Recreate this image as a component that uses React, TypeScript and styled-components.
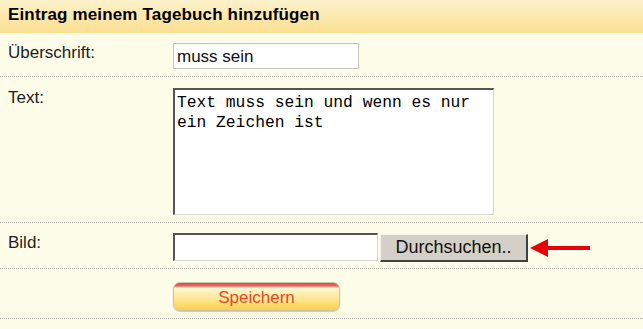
import styled, { createGlobalStyle } from 'styled-components';

const GlobalStyle = createGlobalStyle`
  html, body {
    margin: 0;
    padding: 0;
    background: #fdfdea;
  }
  body {
    font-family: "Liberation Sans", Arial, sans-serif;
    color: #1a1a1a;
  }
`;

const Panel = styled.div`
  width: 643px;
  background: #fdfdea;
`;

const Header = styled.h2`
  margin: 0;
  height: 33px;
  box-sizing: border-box;
  padding: 5px 0 8px 8px;
  font-size: 17px;
  line-height: 20px;
  font-weight: bold;
  letter-spacing: 0.15px;
  color: #000;
  background: linear-gradient(to bottom, #fdf2cc 0%, #fce6a6 60%, #fbdf92 100%);
`;

const Row = styled.div<{ $top?: number }>`
  display: grid;
  grid-template-columns: 165px 1fr;
  align-items: start;
  padding: ${({ $top }) => $top ?? 10}px 0 7px 8px;
  border-bottom: 1px dotted #a9a9a2;
`;

const Label = styled.label`
  font-size: 17px;
  line-height: 20px;
  color: #222;
`;

const TextInput = styled.input`
  display: block;
  box-sizing: border-box;
  width: 186px;
  height: 26px;
  margin: 0;
  padding: 2px 3px 0;
  border: 1px solid #c4c4bc;
  background: #fff;
  font-family: "Liberation Sans", Arial, sans-serif;
  font-size: 17px;
  color: #111;
  outline: none;
`;

const TextArea = styled.textarea`
  display: block;
  box-sizing: border-box;
  width: 321px;
  height: 127px;
  margin: 0;
  padding: 3px 2px;
  border-style: solid;
  border-width: 2px 1px 1px 2px;
  border-color: #555 #d8d8d0 #d8d8d0 #555;
  background: #fff;
  font-family: "Liberation Mono", "Courier New", monospace;
  font-size: 16.3px;
  line-height: 20px;
  color: #000;
  resize: none;
  outline: none;
`;

const FileRow = styled.div`
  display: flex;
  align-items: center;
  gap: 2px;
  height: 28px;
`;

const FileBox = styled.div`
  box-sizing: border-box;
  width: 205px;
  height: 28px;
  background: #fff;
  border-style: solid;
  border-width: 2px 1px 1px 2px;
  border-color: #555 #d8d8d0 #d8d8d0 #555;
`;

const BrowseButton = styled.button`
  box-sizing: border-box;
  width: 148px;
  height: 28px;
  margin: 1px 0 0;
  padding: 0;
  background: #d4d0c8;
  border-style: solid;
  border-width: 1px 2px 2px 1px;
  border-color: #f4f2ee #404040 #404040 #f4f2ee;
  font-family: "Liberation Sans", Arial, sans-serif;
  font-size: 18px;
  color: #111;
`;

const Arrow = styled.svg`
  display: block;
  margin-top: 1px;
`;

const SaveButton = styled.button`
  display: block;
  box-sizing: border-box;
  width: 167px;
  height: 29px;
  margin: 0;
  padding: 2px 0 0;
  border: 1px solid #c9c2a8;
  border-radius: 7px;
  background: linear-gradient(
    to bottom,
    #de4f4a 0px,
    #e46a5e 3px,
    #fff7d2 5px,
    #fee99a 55%,
    #fbd04a 100%
  );
  box-shadow: 0 1px 1px rgba(120, 110, 80, 0.35);
  font-family: "Liberation Sans", Arial, sans-serif;
  font-size: 17px;
  color: #e04a2c;
`;

export default function App() {
  return (
    <Panel>
      <GlobalStyle />
      <Header>Eintrag meinem Tagebuch hinzufügen</Header>
      <Row>
        <Label>Überschrift:</Label>
        <div>
          <TextInput defaultValue="muss sein" />
        </div>
      </Row>
      <Row $top={11}>
        <Label>Text:</Label>
        <div>
          <TextArea defaultValue="Text muss sein und wenn es nur ein Zeichen ist" />
        </div>
      </Row>
      <Row>
        <Label>Bild:</Label>
        <FileRow>
          <FileBox />
          <BrowseButton>Durchsuchen..</BrowseButton>
          <Arrow width="62" height="20" viewBox="0 0 62 20">
            <polygon points="0,10 18,1 18,8 60,8 60,12 18,12 18,19" fill="#e8000a" />
          </Arrow>
        </FileRow>
      </Row>
      <Row $top={13}>
        <span />
        <div>
          <SaveButton>Speichern</SaveButton>
        </div>
      </Row>
    </Panel>
  );
}
